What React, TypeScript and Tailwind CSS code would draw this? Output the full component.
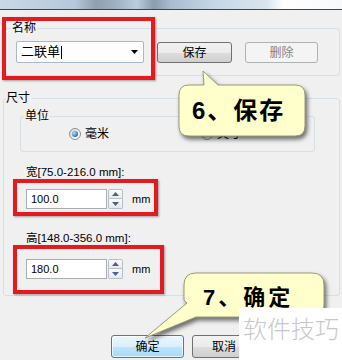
import React from "react";

const FONT = { fontFamily: '"Liberation Sans", "Noto Sans CJK SC", sans-serif' };
const CJK = { fontFamily: '"Liberation Sans", "Noto Sans CJK SC", sans-serif' };

function Radio({ on }: { on?: boolean }) {
  return (
    <span className="w-[12px] h-[12px] rounded-full border border-[#8e8f8f] bg-[linear-gradient(135deg,#d6d6d6,#ffffff)] flex items-center justify-center shrink-0">
      {on ? (
        <span className="w-[6px] h-[6px] rounded-full bg-[radial-gradient(circle_at_35%_35%,#b4e2ff,#1c68ad_75%)]" />
      ) : (
        <span className="w-[6px] h-[6px] rounded-full bg-[#eeeeee]" />
      )}
    </span>
  );
}

function Spin() {
  return (
    <div className="w-[15px] h-[20px] flex flex-col ml-[1px]">
      <div className="h-[10px] border border-[#b7bec8] rounded-t-[2px] bg-[linear-gradient(#fbfbfb,#e6e9ee)] flex items-center justify-center">
        <svg width="7" height="4" viewBox="0 0 7 4">
          <path d="M0 4 L3.5 0 L7 4Z" fill="#4d6185" />
        </svg>
      </div>
      <div className="h-[10px] border border-t-0 border-[#b7bec8] rounded-b-[2px] bg-[linear-gradient(#fbfbfb,#e6e9ee)] flex items-center justify-center">
        <svg width="7" height="4" viewBox="0 0 7 4">
          <path d="M0 0 L3.5 4 L7 0Z" fill="#4d6185" />
        </svg>
      </div>
    </div>
  );
}

function NumRow({ value }: { value: string }) {
  return (
    <div className="flex items-center ml-[22px]">
      <div className="w-[81px] h-[20px] bg-white border border-[#abadb3] flex items-center pl-[4px] text-[11px] text-black">
        {value}
      </div>
      <Spin />
      <span className="ml-[9px] text-[11px] text-black">mm</span>
    </div>
  );
}

export default function App() {
  return (
    <div className="w-[342px] h-[360px] bg-[#f0f0f0] relative overflow-hidden" style={FONT}>
      {/* blurred title strip */}
      <div className="h-[9px] bg-[linear-gradient(90deg,#c9d8e6_0%,#b4c9dc_22%,#8f9fae_28%,#9eb2c4_34%,#b9cddf_40%,#8a9cae_45%,#a8bdd0_50%,#c4d6e6_62%,#d9e5ef_78%,#ffffff_83%,#f7f9fb_100%)]" />
      <div className="h-[1px] bg-[#3d454d]" />

      {/* 名称 group */}
      <div className="mt-[18px] ml-[4px] mr-[2px] h-[48px] border border-[#d5dfe5] rounded-[3px] relative">
        <span className="absolute -top-[8px] left-[6px] px-[1px] bg-[#f0f0f0] text-[12px] leading-[14px] text-black">名称</span>
        <div className="flex items-start pt-[12px] pl-[11px]">
          <div className="w-[128px] h-[22px] bg-white border border-[#a9b9cc] rounded-[2px] flex items-center pl-[4px] pr-[5px] text-[13px] text-black">
            <span className="leading-[16px]">二联单</span>
            <span className="w-[1px] h-[13px] bg-black ml-[1px]" />
            <span className="flex-1" />
            <svg width="7" height="4" viewBox="0 0 7 4">
              <path d="M0 0 L3.5 4 L7 0Z" fill="#000" />
            </svg>
          </div>
          <button className="ml-[13px] mt-[1px] w-[75px] h-[21px] border border-[#707070] rounded-[3px] bg-[linear-gradient(#f2f2f2_0%,#ebebeb_50%,#dddddd_51%,#cfcfcf_100%)] text-[12px] leading-[14px] text-black flex items-center justify-center">
            保存
          </button>
          <button className="ml-[13px] mt-[1px] w-[73px] h-[21px] border border-[#adb2b5] rounded-[3px] bg-[#f4f4f4] text-[12px] leading-[14px] text-[#838383] flex items-center justify-center">
            删除
          </button>
        </div>
      </div>

      {/* 尺寸 group */}
      <div className="mt-[22px] ml-[3px] mr-[2px] h-[198px] border border-[#d5dfe5] rounded-[3px] relative">
        <span className="absolute -top-[8px] left-[2px] pr-[2px] bg-[#f0f0f0] text-[12px] leading-[14px] text-black">尺寸</span>

        {/* 单位 */}
        <div className="mt-[17px] ml-[16px] w-[295px] h-[36px] border border-[#d5dfe5] rounded-[3px] relative flex items-center pb-[1px]">
          <span className="absolute -top-[8px] left-[3px] px-[1px] bg-[#f0f0f0] text-[12px] leading-[14px] text-black">单位</span>
          <div className="ml-[48px] flex items-center">
            <Radio on />
            <span className="ml-[4px] text-[12px] leading-[14px] text-black">毫米</span>
          </div>
          <div className="ml-[92px] flex items-center">
            <Radio />
            <span className="ml-[4px] text-[12px] leading-[14px] text-black">英寸</span>
          </div>
        </div>

        <div className="mt-[13px] ml-[22px] text-[11.5px] leading-[14px] text-black" style={CJK}>宽[75.0-216.0 mm]:</div>
        <div className="mt-[10px]">
          <NumRow value="100.0" />
        </div>
        <div className="mt-[22px] ml-[22px] text-[11.5px] leading-[14px] text-black" style={CJK}>高[148.0-356.0 mm]:</div>
        <div className="mt-[14px]">
          <NumRow value="180.0" />
        </div>
      </div>

      {/* bottom buttons */}
      <div className="mt-[39px] ml-[111px] flex">
        <button className="w-[73px] h-[23px] border border-[#3c7fb1] rounded-[3px] bg-[linear-gradient(#eaf6fd_0%,#d9f0fc_50%,#bee6fd_51%,#a7d9f5_100%)] shadow-[inset_0_0_0_1px_rgba(255,255,255,0.7)] text-[12px] leading-[14px] text-black flex items-center justify-center">
          确定
        </button>
        <button className="ml-[8px] w-[64px] h-[23px] border border-[#707070] rounded-[3px] bg-[linear-gradient(#f2f2f2_0%,#ebebeb_50%,#dddddd_51%,#cfcfcf_100%)] text-[12px] leading-[14px] text-black flex items-center justify-center">
          取消
        </button>
      </div>

      {/* red annotation boxes */}
      <div className="absolute left-[2px] top-[17px] w-[153px] h-[63px] border-[4px] border-[#e31b1f] shadow-[1px_1px_2px_rgba(0,0,0,0.35)]" />
      <div className="absolute left-[13px] top-[179px] w-[145px] h-[37px] border-[4px] border-[#e31b1f] shadow-[1px_1px_2px_rgba(0,0,0,0.35)]" />
      <div className="absolute left-[13px] top-[245px] w-[151px] h-[49px] border-[4px] border-[#e31b1f] shadow-[1px_1px_2px_rgba(0,0,0,0.35)]" />

      {/* callout shapes */}
      <svg className="absolute left-0 top-0 drop-shadow-[2px_3px_2px_rgba(0,0,0,0.55)]" width="342" height="360" viewBox="0 0 342 360">
        <path
          d="M189,85 L204,85 L203,71 L218,85 L295,85 Q305,85 305,95 L305,126 Q305,136 295,136 L189,136 Q179,136 179,126 L179,95 Q179,85 189,85 Z"
          fill="#ffffcc"
          stroke="#9a9a7a"
          strokeWidth="1"
        />
        <path
          d="M196,273 L312,273 Q324,273 324,285 L324,305 Q324,317 312,317 L196,317 L145,338 L187,303 L184,300 L184,285 Q184,273 196,273 Z"
          fill="#ffffcc"
          stroke="#9a9a7a"
          strokeWidth="1"
        />
      </svg>
      <div className="absolute left-[179px] top-[85px] w-[126px] h-[51px] flex items-center pl-[13px] text-[24px] leading-[28px] font-bold tracking-[2px] text-black" style={CJK}>
        6、保存
      </div>
      <div className="absolute left-[184px] top-[273px] w-[140px] h-[44px] flex items-center pl-[19px] pt-[6px] text-[22px] leading-[26px] font-bold tracking-[3px] text-black" style={CJK}>
        7、确定
      </div>

      {/* watermark */}
      <div className="absolute left-[239px] top-[308px] w-[103px] h-[52px] bg-white pl-[4px] pt-[5px] text-[24px] leading-[30px] font-light text-[#c8c8c8] whitespace-nowrap" style={{ fontFamily: '"Noto Sans CJK SC", sans-serif' }}>
        软件技巧
      </div>
    </div>
  );
}
